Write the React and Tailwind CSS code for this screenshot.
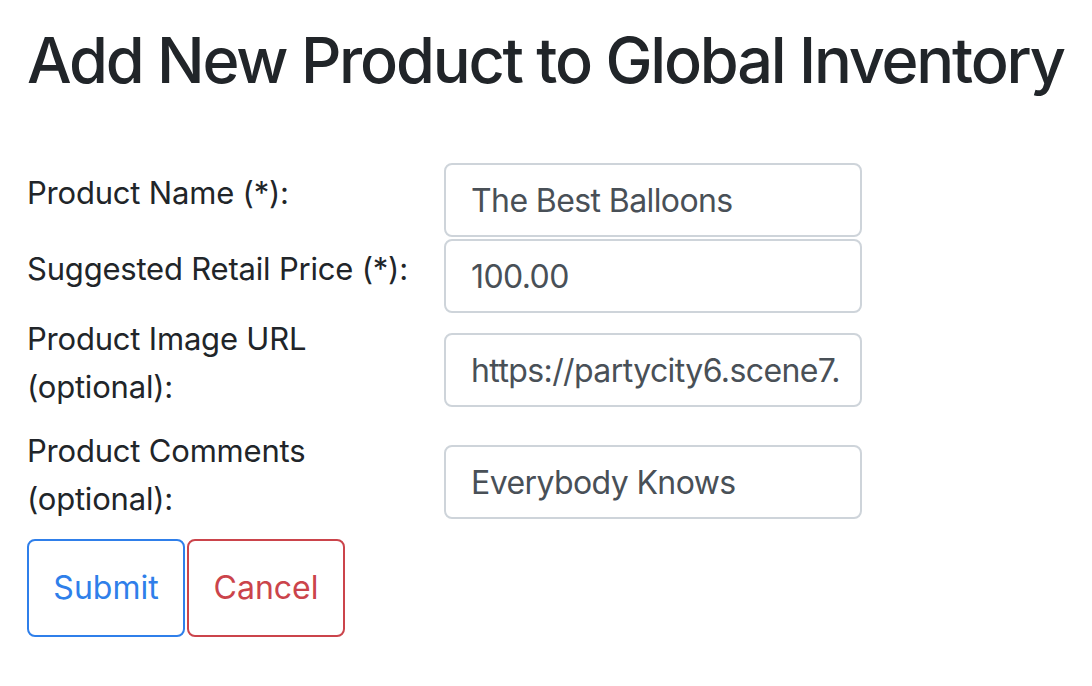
import React from 'react'

const fields = [
  { label: 'Product Name (*):', value: 'The Best Balloons' },
  { label: 'Suggested Retail Price (*):', value: '100.00' },
  { label: 'Product Image URL (optional):', value: 'https://partycity6.scene7.com/is/image/PartyCity/_pdp_sq_?$_1000x1000_$&$product=PartyCity/P802196' },
  { label: 'Product Comments (optional):', value: 'Everybody Knows' },
]

export default function App() {
  return (
    <div className="min-h-screen overflow-hidden bg-white pl-[27px] text-[#212529]" style={{ fontFamily: 'Inter, "Liberation Sans", sans-serif' }}>
      <h1 className="whitespace-nowrap pt-[22px] text-[63px] font-medium leading-[77px] tracking-[-2.2px]">
        Add New Product to Global Inventory
      </h1>

      <form className="mt-[64px]" onSubmit={(e) => e.preventDefault()}>
        <div className="grid grid-cols-[418px_418px] gap-y-[2px] items-center">
          {fields.map((f) => (
            <React.Fragment key={f.label}>
              <label className="mb-[14px] pr-[20px] text-[31px] leading-[48px] tracking-[-0.2px]">{f.label}</label>
              <input
                readOnly
                value={f.value}
                className="-ml-px h-[74px] w-[418px] rounded-[8px] border-2 border-[#ced4da] bg-white pl-[25px] pr-[21px] text-[32px] tracking-[-0.6px] text-[#495057] outline-none"
              />
            </React.Fragment>
          ))}
        </div>

        <div className="mt-[2px] flex gap-[2px]">
          <button type="submit" className="h-[98px] w-[158px] rounded-[8px] border-2 border-[#2f7fea] text-[32px] text-[#2f7fea]">
            Submit
          </button>
          <button type="button" className="h-[98px] w-[158px] rounded-[8px] border-2 border-[#cb444b] text-[32px] text-[#cb444b]">
            Cancel
          </button>
        </div>
      </form>
    </div>
  )
}
